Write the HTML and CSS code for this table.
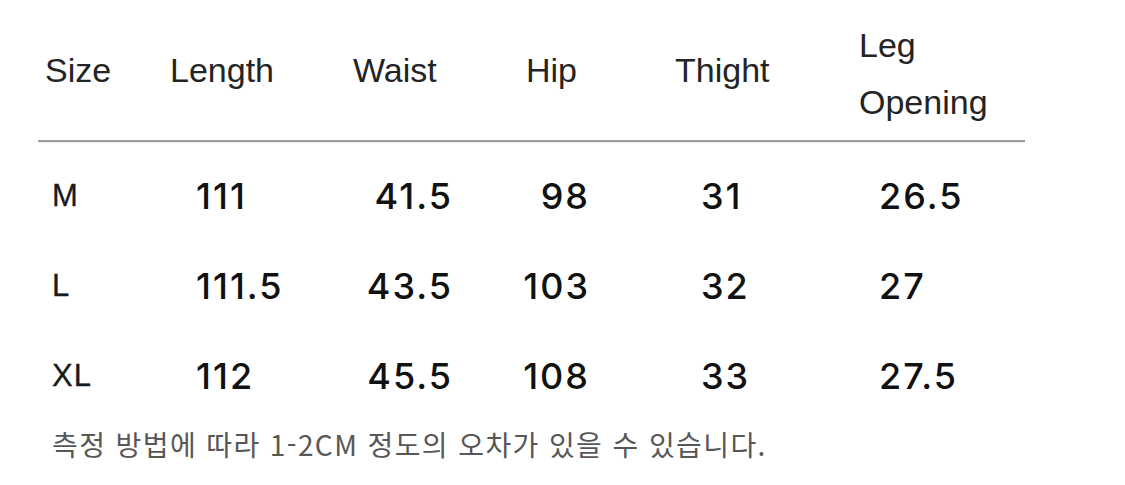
FILE: index.html
```html
<!DOCTYPE html>
<html lang="ko">
<head>
<meta charset="utf-8">
<title>Size chart</title>
<link rel="stylesheet" href="styles.css">
</head>
<body>
<div class="chart">
  <div class="grid head">
    <div class="cell">Size</div>
    <div class="cell">Length</div>
    <div class="cell">Waist</div>
    <div class="cell">Hip</div>
    <div class="cell">Thight</div>
    <div class="cell two">Leg<br>Opening</div>
  </div>
  <div class="rule"></div>
  <div class="grid data">
    <div class="cell size">M</div>
    <div class="cell">111</div>
    <div class="cell">41.5</div>
    <div class="cell">98</div>
    <div class="cell">31</div>
    <div class="cell">26.5</div>
  </div>
  <div class="grid data">
    <div class="cell size">L</div>
    <div class="cell">111.5</div>
    <div class="cell">43.5</div>
    <div class="cell">103</div>
    <div class="cell">32</div>
    <div class="cell">27</div>
  </div>
  <div class="grid data">
    <div class="cell size">XL</div>
    <div class="cell">112</div>
    <div class="cell">45.5</div>
    <div class="cell">108</div>
    <div class="cell">33</div>
    <div class="cell">27.5</div>
  </div>
  <p class="note">측정 방법에 따라 1-2CM 정도의 오차가 있을 수 있습니다.</p>
</div>
</body>
</html>
```

FILE: styles.css
```css
html, body {
  margin: 0;
  padding: 0;
  background: #ffffff;
}

.chart {
  width: 987px;
  margin-left: 38px;
  padding-top: 17px;
  font-family: "Liberation Sans", Arial, sans-serif;
}

.grid {
  display: grid;
  grid-template-columns: 112px 150px 160px 140px 200px 225px;
}

/* header */
.head {
  height: 114px;
  align-items: center;
  color: #242424;
  font-size: 34px;
}
.head .cell {
  line-height: 57px;
  padding-bottom: 8px;
}
.head .cell.two {
  padding-bottom: 0;
}
.head .cell:nth-child(1) { padding-left: 7px; }
.head .cell:nth-child(2) { padding-left: 20px; }
.head .cell:nth-child(3) { padding-left: 53px; }
.head .cell:nth-child(4) { padding-left: 66px; }
.head .cell:nth-child(5) { padding-left: 75px; }
.head .cell:nth-child(6) { padding-left: 59px; }

.rule {
  height: 2px;
  margin-top: 9px;
  background: #9c9c9c;
  box-shadow: 0 1px 1px rgba(0,0,0,0.08);
}

/* data */
.data {
  color: #111111;
  font-family: "Inter", "Liberation Sans", sans-serif;
  font-size: 36px;
  font-weight: 500;
  font-variant-numeric: proportional-nums;
}
.rule + .data { margin-top: 9px; }
.data .cell {
  line-height: 90px;
  letter-spacing: 2px;
}
.data .cell.size {
  font-family: "Liberation Sans", Arial, sans-serif;
  font-weight: 400;
  font-size: 31px;
  color: #1a1a1a;
  -webkit-text-stroke: 0.3px #1a1a1a;
  letter-spacing: 1px;
  padding-left: 14px;
}
.data .cell:nth-child(2) { padding-left: 46px; }
.data .cell:nth-child(3) { text-align: right; padding-right: 7px; }
.data .cell:nth-child(4) { text-align: right; padding-right: 10px; }
.data .cell:nth-child(5) { padding-left: 101px; }
.data .cell:nth-child(6) { padding-left: 79px; }

.note {
  margin: 3px 0 0 0;
  padding-left: 14px;
  font-family: "Noto Sans CJK KR", "Noto Sans", sans-serif;
  font-size: 28px;
  line-height: 40px;
  color: #575757;
  letter-spacing: 1.4px;
}
```
